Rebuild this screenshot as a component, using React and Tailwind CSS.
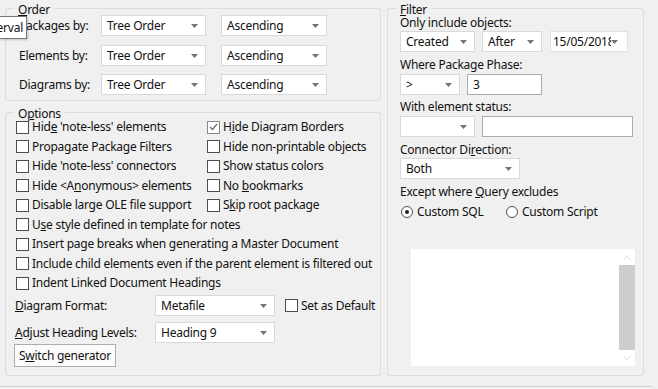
import React from 'react';

function Arrow() {
  return (
    <svg width="7" height="4" viewBox="0 0 7 4" className="shrink-0">
      <path d="M0 0h7L3.5 4z" fill="#737373" />
    </svg>
  );
}

function Select({ value, className = '' }) {
  return (
    <div className={`flex items-center justify-between h-[21px] bg-white border border-[#d9d9d9] pl-[5px] pr-[7px] ${className}`}>
      <span className="whitespace-nowrap leading-[14px]">{value}</span>
      <Arrow />
    </div>
  );
}

function TextBox({ value, className = '' }) {
  return (
    <div className={`flex items-center h-[21px] bg-white border border-[#ababab] pl-[5px] ${className}`}>
      {value}
    </div>
  );
}

function Check({ checked, children, className = '' }) {
  return (
    <label className={`flex items-center gap-[3px] h-[16px] whitespace-nowrap ${className}`}>
      <span className={`flex items-center justify-center w-[13px] h-[13px] bg-white border shrink-0 ${checked ? 'border-[#8a8a8a]' : 'border-[#4d4d4d]'}`}>
        {checked && (
          <svg width="9" height="8" viewBox="0 0 9 8">
            <path d="M1 4l2.5 2.5L8 1" fill="none" stroke="#6b6b6b" strokeWidth="1.2" />
          </svg>
        )}
      </span>
      <span className="leading-[14px]">{children}</span>
    </label>
  );
}

function Radio({ checked, children, className = '' }) {
  return (
    <label className={`flex items-center gap-[4px] h-[14px] whitespace-nowrap ${className}`}>
      <span className="flex items-center justify-center w-[12px] h-[12px] rounded-full bg-white border border-[#4d4d4d] shrink-0">
        {checked && <span className="w-[4px] h-[4px] rounded-full bg-[#222]" />}
      </span>
      <span className="leading-[14px]">{children}</span>
    </label>
  );
}

function Group({ legend, className = '', children }) {
  return (
    <fieldset className={`border border-[#dcdcdc] rounded-[3px] ${className}`}>
      <legend className="ml-[8px] px-[4px] leading-[14px]">
        <span className="block translate-y-[2px]">{legend}</span>
      </legend>
      {children}
    </fieldset>
  );
}

export default function App() {
  return (
    <div className="relative w-[658px] h-[389px] bg-[#f0f0f0] text-[12px] tracking-[-0.25px] text-[#111] font-['Noto_Sans',sans-serif] overflow-hidden">
      <div className="flex pt-[1px] pl-[5px] gap-[6px] h-[386px]">
        {/* left column */}
        <div className="w-[376px] flex flex-col">
          <Group legend={<><u>O</u>rder</>} className="h-[100px]">
            <div className="pl-[13px] flex flex-col">
              <div className="flex items-center h-[21px]">
                <span className="w-[82px]">Packages by:</span>
                <Select value="Tree Order" className="w-[105px]" />
                <Select value="Ascending" className="w-[106px] ml-[15px]" />
              </div>
              <div className="flex items-center h-[21px] mt-[9px]">
                <span className="w-[82px]">Elements by:</span>
                <Select value="Tree Order" className="w-[105px]" />
                <Select value="Ascending" className="w-[106px] ml-[15px]" />
              </div>
              <div className="flex items-center h-[21px] mt-[8px]">
                <span className="w-[82px]">Diagrams by:</span>
                <Select value="Tree Order" className="w-[105px]" />
                <Select value="Ascending" className="w-[106px] ml-[15px]" />
              </div>
            </div>
          </Group>

          <Group legend={<>O<u>p</u>tions</>} className="mt-[4px] h-[271px]">
            <div className="pl-[10px] grid grid-cols-[191px_1fr] gap-y-[3.5px]">
              <Check>Hid<u>e</u> 'note-less' elements</Check>
              <Check checked>H<u>i</u>de Diagram Borders</Check>
              <Check>Propagate Package Filters</Check>
              <Check>Hide non-printable objects</Check>
              <Check>Hide 'note-less' connectors</Check>
              <Check>Show status colors</Check>
              <Check>Hide &lt;A<u>n</u>onymous&gt; elements</Check>
              <Check>No <u>b</u>ookmarks</Check>
              <Check>Disable large OLE file support</Check>
              <Check>S<u>k</u>ip root package</Check>
              <Check className="col-span-2">U<u>s</u>e style defined in template for notes</Check>
              <Check className="col-span-2">Insert page breaks when generating a Master Document</Check>
              <Check className="col-span-2">Include child elements even if the parent element is filtered out</Check>
              <Check className="col-span-2">Indent Linked Document Headings</Check>
            </div>
            <div className="pl-[9px] mt-[4px] flex flex-col">
              <div className="flex items-center h-[21px]">
                <span className="w-[140px]"><u>D</u>iagram Format:</span>
                <Select value="Metafile" className="w-[120px]" />
                <Check className="ml-[10px]">Set as Default</Check>
              </div>
              <div className="flex items-center h-[21px] mt-[6px]">
                <span className="w-[140px]"><u>A</u>djust Heading Levels:</span>
                <Select value="Heading 9" className="w-[120px]" />
              </div>
              <button className="mt-[1px] -ml-[1px] w-[102px] h-[23px] bg-[#fbfbfb] border border-[#adadad] leading-[14px]">
                S<u>w</u>itch generator
              </button>
            </div>
          </Group>
        </div>

        {/* right column */}
        <Group legend={<><u>F</u>ilter</>} className="w-[257px] h-[375px]">
          <div className="pl-[12px] flex flex-col">
            <span className="mt-[1px] leading-[14px]">Only include objects:</span>
            <div className="flex mt-[1px]">
              <Select value="Created" className="w-[75px]" />
              <Select value="After" className="w-[60px] ml-[7px]" />
              <div className="flex items-center justify-between w-[78px] ml-[8px] h-[21px] bg-white border border-[#e0e0e0] pl-[2px] pr-[9px]">
                <span className="w-[58px] overflow-hidden whitespace-nowrap leading-[14px]">15/05/2018</span>
                <Arrow />
              </div>
            </div>
            <span className="mt-[6px] leading-[14px]">Where Package Phase:</span>
            <div className="flex mt-[2px]">
              <Select value=">" className="w-[60px]" />
              <TextBox value="3" className="w-[75px] ml-[7px]" />
            </div>
            <span className="mt-[5px] leading-[14px]">With element status:</span>
            <div className="flex mt-[2px]">
              <Select value="" className="w-[75px] h-[20px]" />
              <TextBox value="" className="w-[151px] ml-[7px] h-[20px]" />
            </div>
            <span className="mt-[6px] leading-[14px]">Connector Di<u>r</u>ection:</span>
            <Select value="Both" className="w-[120px] mt-[1px]" />
            <span className="mt-[6px] leading-[14px]">Except where <u>Q</u>uery excludes</span>
            <div className="flex mt-[6px] ml-[1px]">
              <Radio checked className="w-[105px]">Custom SQL</Radio>
              <Radio>Custom Script</Radio>
            </div>
            <div className="mt-[30px] ml-[11px] w-[224px] h-[117px] bg-white flex justify-end">
              <div className="w-[16px] flex flex-col">
                <div className="h-[16px] flex items-center justify-center">
                  <svg width="8" height="5" viewBox="0 0 8 5"><path d="M0 5L4 1l4 4" fill="none" stroke="#ececec" strokeWidth="1.5" /></svg>
                </div>
                <div className="h-[85px] bg-[#cdcdcd]" />
                <div className="flex-1 flex items-center justify-center">
                  <svg width="8" height="5" viewBox="0 0 8 5"><path d="M0 0l4 4 4-4" fill="none" stroke="#ececec" strokeWidth="1.5" /></svg>
                </div>
              </div>
            </div>
          </div>
        </Group>
      </div>
      <div className="h-px w-[653px] bg-[#d2d2d2]" />

      {/* tooltip */}
      <div className="absolute left-0 top-[16px] w-[27px] h-[23px] flex items-center justify-end overflow-hidden bg-white border border-l-0 border-[#767676] pr-[3px] shadow-[1px_1px_2px_rgba(0,0,0,0.2)]">
        <span className="whitespace-nowrap leading-[14px]">Interval</span>
      </div>
    </div>
  );
}
